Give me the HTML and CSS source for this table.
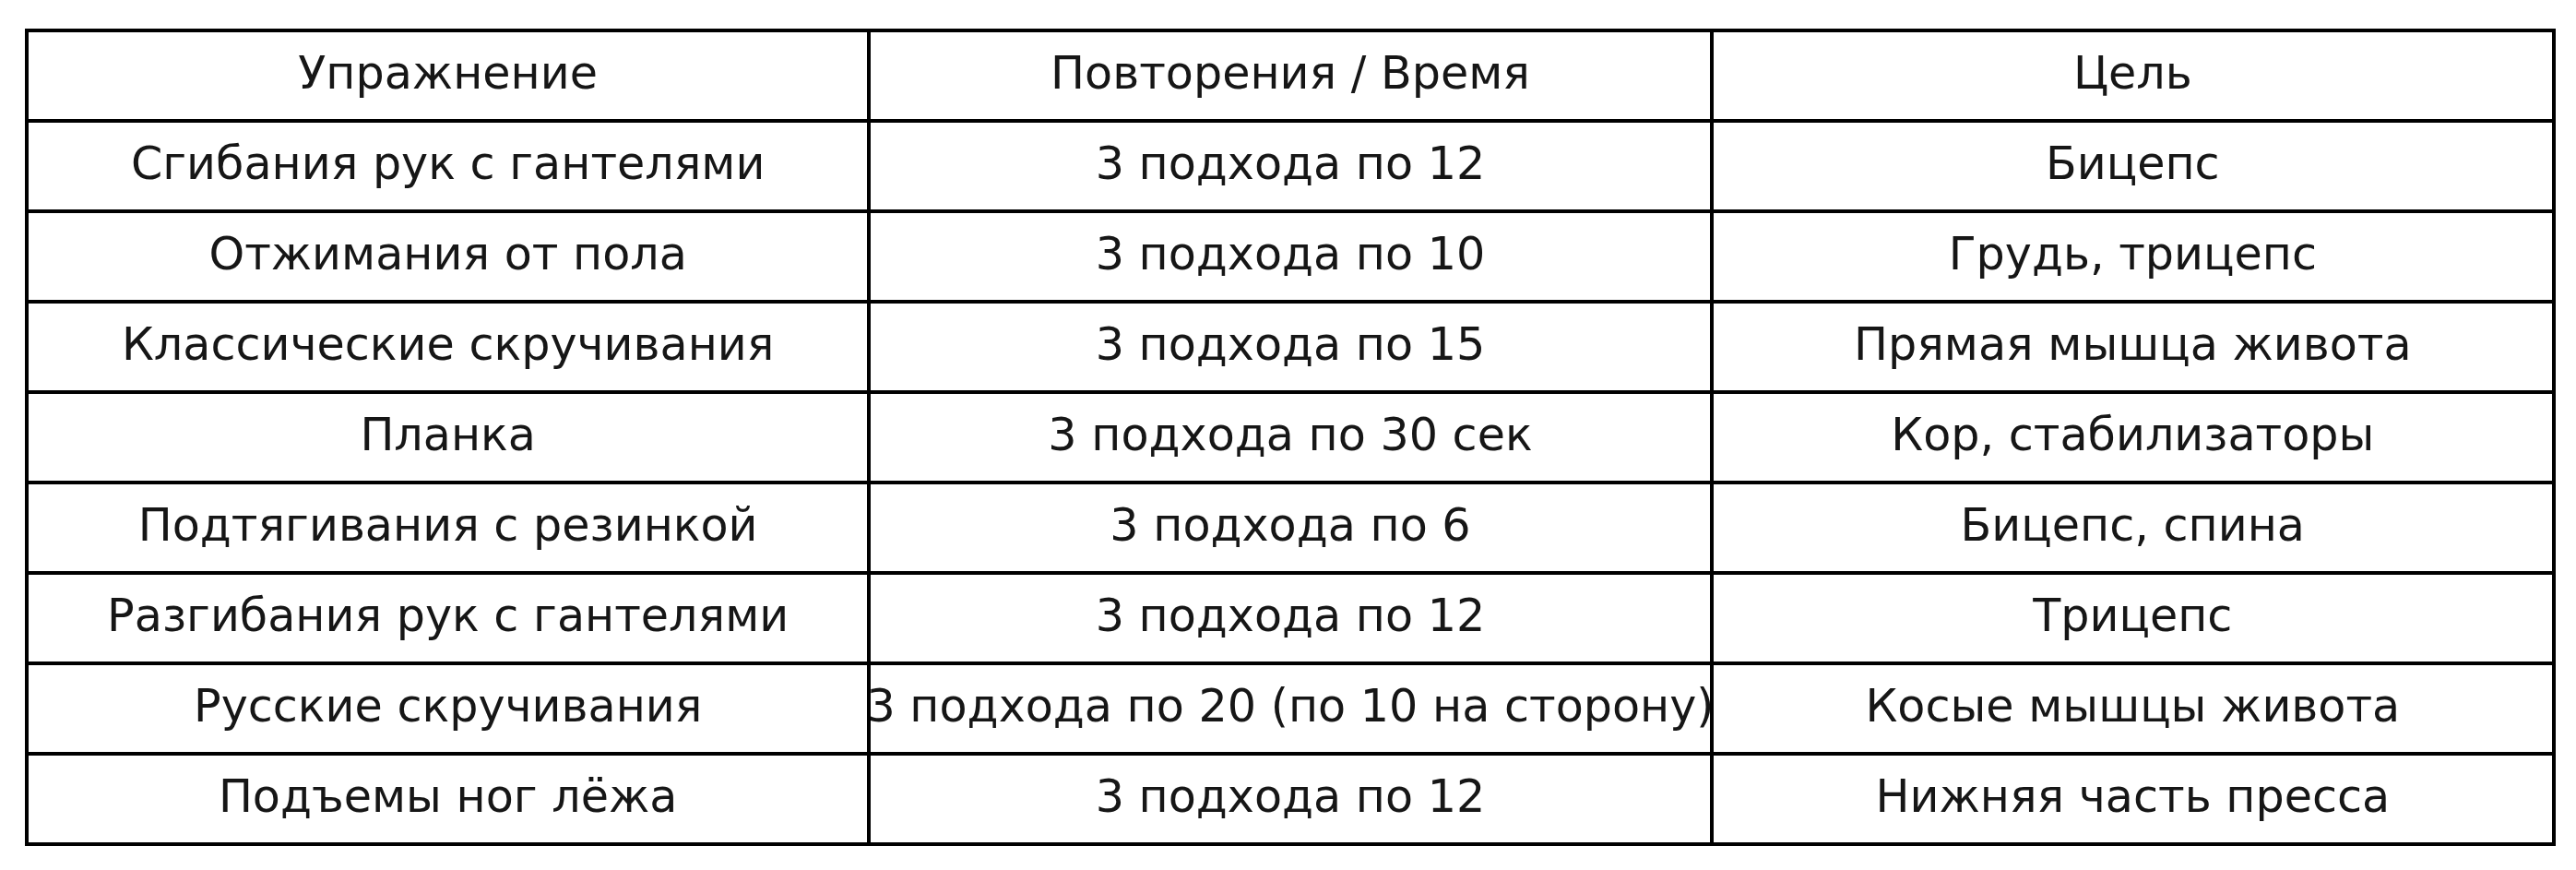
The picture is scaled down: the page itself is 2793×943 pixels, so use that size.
FILE: index.html
```html
<!DOCTYPE html>
<html lang="ru">
<head>
<meta charset="utf-8">
<title>Упражнения</title>
<link rel="stylesheet" href="styles.css">
</head>
<body>
<div class="table">
  <div class="cell">Упражнение</div>
  <div class="cell">Повторения / Время</div>
  <div class="cell">Цель</div>

  <div class="cell">Сгибания рук с гантелями</div>
  <div class="cell">3 подхода по 12</div>
  <div class="cell">Бицепс</div>

  <div class="cell">Отжимания от пола</div>
  <div class="cell">3 подхода по 10</div>
  <div class="cell">Грудь, трицепс</div>

  <div class="cell">Классические скручивания</div>
  <div class="cell">3 подхода по 15</div>
  <div class="cell">Прямая мышца живота</div>

  <div class="cell">Планка</div>
  <div class="cell">3 подхода по 30 сек</div>
  <div class="cell">Кор, стабилизаторы</div>

  <div class="cell">Подтягивания с резинкой</div>
  <div class="cell">3 подхода по 6</div>
  <div class="cell">Бицепс, спина</div>

  <div class="cell">Разгибания рук с гантелями</div>
  <div class="cell">3 подхода по 12</div>
  <div class="cell">Трицепс</div>

  <div class="cell">Русские скручивания</div>
  <div class="cell">3 подхода по 20 (по 10 на сторону)</div>
  <div class="cell">Косые мышцы живота</div>

  <div class="cell">Подъемы ног лёжа</div>
  <div class="cell">3 подхода по 12</div>
  <div class="cell">Нижняя часть пресса</div>
</div>
</body>
</html>
```
FILE: styles.css
```css
html, body {
  margin: 0;
  padding: 0;
  background: #ffffff;
}

body {
  padding: 31px 0 0 27px;
  font-family: "DejaVu Sans", "Noto Sans", sans-serif;
  color: #161616;
}

.table {
  box-sizing: border-box;
  width: 2744px;
  display: grid;
  grid-template-columns: repeat(3, 1fr);
  grid-auto-rows: 98px;
  border-left: 4px solid #000;
  border-top: 4px solid #000;
}

.cell {
  box-sizing: border-box;
  border-right: 4px solid #000;
  border-bottom: 4px solid #000;
  display: flex;
  align-items: center;
  justify-content: center;
  white-space: nowrap;
  overflow: hidden;
  font-size: 49.2px;
  padding-bottom: 7px;
  min-width: 0;
}
```
